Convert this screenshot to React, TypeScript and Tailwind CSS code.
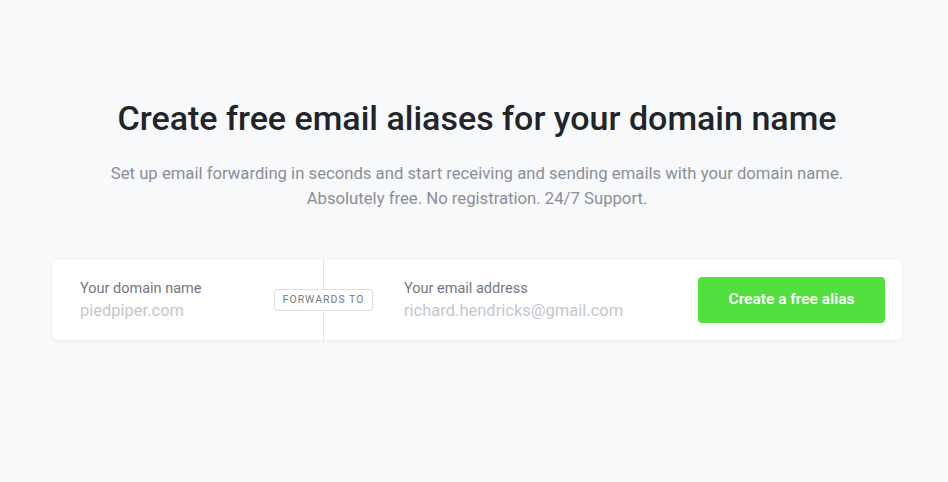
import { useState } from 'react'

// ── Field ─────────────────────────────────────────────────────────────────────

function Field({ label, placeholder, autoFocus }: { label: string; placeholder: string; autoFocus?: boolean }) {
  const [value, setValue] = useState('')
  return (
    <label className="flex flex-col pt-[2px]">
      <span className="text-[14.5px] leading-[18px] text-[#737880]">{label}</span>
      <input
        value={value}
        onChange={e => setValue(e.target.value)}
        placeholder={placeholder}
        autoFocus={autoFocus}
        className="mt-[2px] w-[240px] bg-transparent text-[16.5px] leading-[22px] text-[#333] placeholder:text-[#c3c7cc] outline-none caret-[#222]"
      />
    </label>
  )
}

// ── App ───────────────────────────────────────────────────────────────────────

export default function App() {
  return (
    <div className="min-h-screen bg-[#f8f9fb] font-['Roboto',sans-serif] pl-[6px] pt-[98px]">
      <h1 className="text-center text-[34px] leading-[40px] font-medium text-[#212429]">
        Create free email aliases for your domain name
      </h1>
      <p className="mt-[23px] text-center text-[16.7px] leading-[25px] text-[#8a8f97]">
        Set up email forwarding in seconds and start receiving and sending emails with your domain name.
        <br />
        Absolutely free. No registration. 24/7 Support.
      </p>

      <form
        onSubmit={e => e.preventDefault()}
        className="mx-auto mt-[49px] flex h-[80px] w-[850px] items-stretch rounded-[6px] bg-white shadow-[0_1px_4px_rgba(30,40,60,0.06)]"
      >
        {/* Domain */}
        <div className="flex w-[271px] items-center pl-[28px]">
          <Field label="Your domain name" placeholder="piedpiper.com" autoFocus />
        </div>

        {/* Divider + badge */}
        <div className="relative w-px bg-[#dfe2e6]">
          <span className="absolute left-1/2 top-1/2 -translate-x-1/2 -translate-y-1/2 whitespace-nowrap rounded-[3px] border border-[#dcdfe3] bg-white px-[8px] py-[4px] text-[10.5px] leading-[12px] tracking-[1px] text-[#767b82]">
            FORWARDS TO
          </span>
        </div>

        {/* Email */}
        <div className="flex flex-1 items-center pl-[80px] pr-[17px]">
          <Field label="Your email address" placeholder="richard.hendricks@gmail.com" />
          <button
            type="submit"
            className="ml-auto h-[46px] w-[187px] rounded-[4px] bg-[#51e03e] text-[15.5px] font-semibold text-white hover:bg-[#45cc33] transition-colors"
          >
            Create a free alias
          </button>
        </div>
      </form>
    </div>
  )
}
